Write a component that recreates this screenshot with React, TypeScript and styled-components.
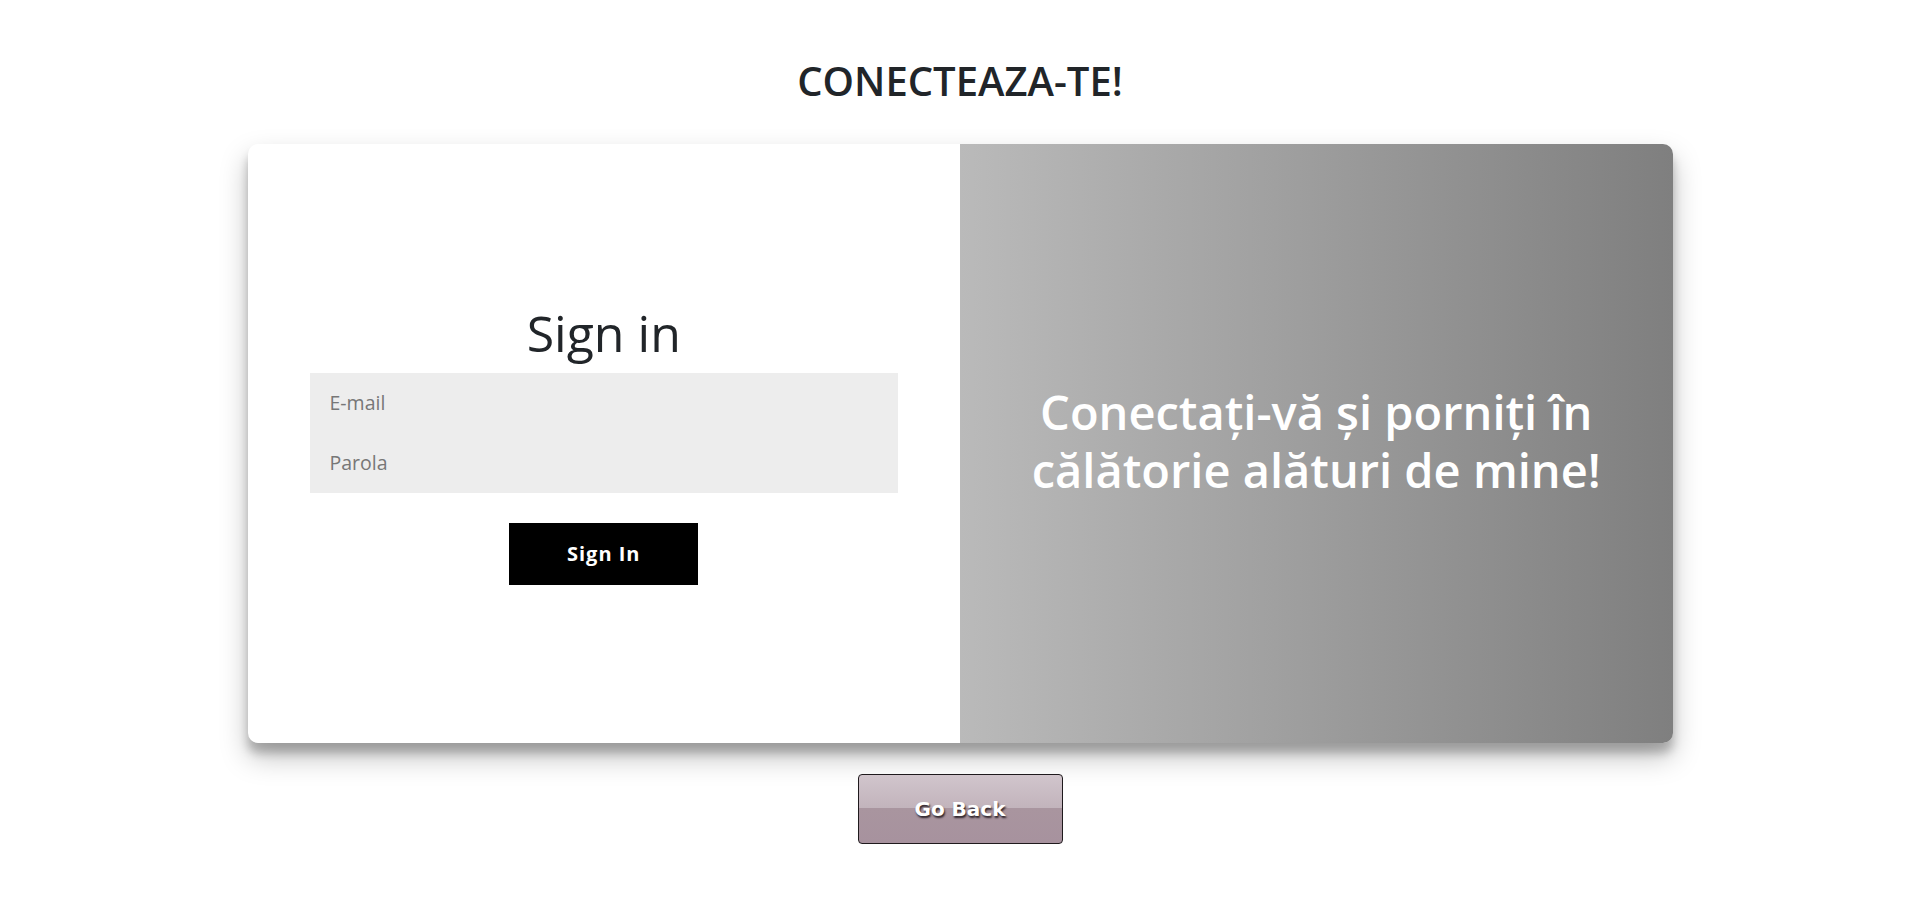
import React from "react";
import styled, { createGlobalStyle } from "styled-components";

const GlobalStyle = createGlobalStyle`
  html, body {
    margin: 0;
    padding: 0;
    background: #ffffff;
  }
  body {
    font-family: "Open Sans", "Noto Sans", sans-serif;
    color: #212529;
  }
  * { box-sizing: border-box; }
`;

const Page = styled.main`
  display: flex;
  flex-direction: column;
  align-items: center;
  padding-top: 57px;
  min-height: 901px;
`;

const Title = styled.h1`
  margin: 0 0 39px;
  font-family: "Open Sans", sans-serif;
  font-size: 40px;
  line-height: 48px;
  font-weight: 600;
  color: #212529;
`;

const Card = styled.section`
  width: 1425px;
  height: 599px;
  display: grid;
  grid-template-columns: 1fr 1fr;
  background: #ffffff;
  border-radius: 10px;
  overflow: hidden;
  box-shadow: 0 14px 28px rgba(0, 0, 0, 0.25), 0 10px 10px rgba(0, 0, 0, 0.22);
`;

const FormPanel = styled.form`
  display: flex;
  flex-direction: column;
  align-items: center;
  justify-content: center;
  padding: 0 62px;
`;

const FormHeading = styled.h2`
  margin: 0 0 10px;
  font-size: 50px;
  line-height: 60px;
  font-weight: 400;
  color: #212529;
`;

const Fields = styled.div`
  width: 100%;
  display: flex;
  flex-direction: column;
  background: #ededed;
`;

const Field = styled.input`
  height: 60px;
  width: 100%;
  border: none;
  outline: none;
  background: transparent;
  padding: 0 20px;
  font-family: "Open Sans", sans-serif;
  font-size: 19.5px;
  color: #333;
  &::placeholder {
    color: #777777;
  }
`;

const SubmitButton = styled.button`
  margin-top: 30px;
  width: 189px;
  height: 62px;
  border: none;
  background: #000000;
  color: #ffffff;
  font-family: "Open Sans", sans-serif;
  font-size: 20px;
  font-weight: 700;
  letter-spacing: 1px;
  cursor: pointer;
`;

const OverlayPanel = styled.div`
  display: flex;
  align-items: center;
  justify-content: center;
  padding: 0 30px 6px;
  background: linear-gradient(to right, #bababa, #7f7f7f);
`;

const OverlayText = styled.h2`
  margin: 0;
  text-align: center;
  color: #ffffff;
  font-size: 47px;
  line-height: 58px;
  font-weight: 600;
`;

const BackButton = styled.button`
  margin-top: 31px;
  width: 205px;
  height: 70px;
  border: 1px solid #1f1a1d;
  border-radius: 4px;
  background: linear-gradient(
    to bottom,
    #d1c5cc 0%,
    #c2b4bc 48%,
    #a9959f 49%,
    #a7929e 100%
  );
  color: #ffffff;
  font-family: "DejaVu Sans", Verdana, sans-serif;
  font-size: 20px;
  font-weight: 700;
  text-shadow: 1px 2px 2px #2b2128;
  cursor: pointer;
`;

export default function App() {
  return (
    <>
      <GlobalStyle />
      <Page>
        <Title>CONECTEAZA-TE!</Title>
        <Card>
          <FormPanel onSubmit={(e) => e.preventDefault()}>
            <FormHeading>Sign in</FormHeading>
            <Fields>
              <Field type="email" placeholder="E-mail" />
              <Field type="password" placeholder="Parola" />
            </Fields>
            <SubmitButton type="submit">Sign In</SubmitButton>
          </FormPanel>
          <OverlayPanel>
            <OverlayText>
              Conectați-vă și porniți în
              <br />
              călătorie alături de mine!
            </OverlayText>
          </OverlayPanel>
        </Card>
        <BackButton type="button">Go Back</BackButton>
      </Page>
    </>
  );
}
